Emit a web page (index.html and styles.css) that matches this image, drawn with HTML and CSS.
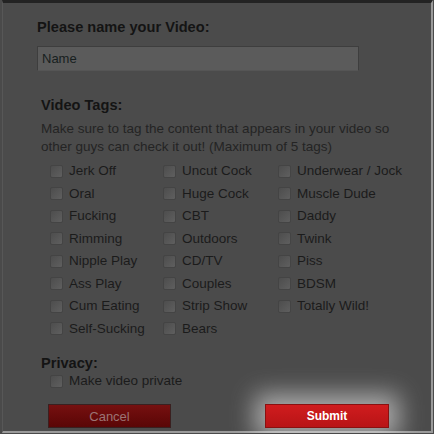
FILE: index.html
```html
<!DOCTYPE html>
<html lang="en">
<head>
    <meta charset="UTF-8">
    <title>Name your Video</title>
    <link rel="stylesheet" href="styles.css">
</head>
<body>
    <div class="dialog">
        <h2 class="title">Please name your Video:</h2>
        <input class="name-field" type="text" value="Name">

        <div class="section">
            <h2>Video Tags:</h2>
            <p class="hint">Make sure to tag the content that appears in your video so other guys can check it out! (Maximum of 5 tags)</p>
            <div class="tag-grid">
                <label class="tag"><input type="checkbox"><span>Jerk Off</span></label>
                <label class="tag"><input type="checkbox"><span>Oral</span></label>
                <label class="tag"><input type="checkbox"><span>Fucking</span></label>
                <label class="tag"><input type="checkbox"><span>Rimming</span></label>
                <label class="tag"><input type="checkbox"><span>Nipple Play</span></label>
                <label class="tag"><input type="checkbox"><span>Ass Play</span></label>
                <label class="tag"><input type="checkbox"><span>Cum Eating</span></label>
                <label class="tag"><input type="checkbox"><span>Self-Sucking</span></label>
                <label class="tag"><input type="checkbox"><span>Uncut Cock</span></label>
                <label class="tag"><input type="checkbox"><span>Huge Cock</span></label>
                <label class="tag"><input type="checkbox"><span>CBT</span></label>
                <label class="tag"><input type="checkbox"><span>Outdoors</span></label>
                <label class="tag"><input type="checkbox"><span>CD/TV</span></label>
                <label class="tag"><input type="checkbox"><span>Couples</span></label>
                <label class="tag"><input type="checkbox"><span>Strip Show</span></label>
                <label class="tag"><input type="checkbox"><span>Bears</span></label>
                <label class="tag"><input type="checkbox"><span>Underwear / Jock</span></label>
                <label class="tag"><input type="checkbox"><span>Muscle Dude</span></label>
                <label class="tag"><input type="checkbox"><span>Daddy</span></label>
                <label class="tag"><input type="checkbox"><span>Twink</span></label>
                <label class="tag"><input type="checkbox"><span>Piss</span></label>
                <label class="tag"><input type="checkbox"><span>BDSM</span></label>
                <label class="tag"><input type="checkbox"><span>Totally Wild!</span></label>
            </div>
        </div>

        <div class="section privacy">
            <h2>Privacy:</h2>
            <label class="tag private"><input type="checkbox"><span>Make video private</span></label>
        </div>

        <div class="actions">
            <button class="btn cancel">Cancel</button>
            <button class="btn submit">Submit</button>
        </div>
    </div>
</body>
</html>
```

FILE: styles.css
```css
body {
    margin: 0;
    background-color: #4a4a4a;
    font-family: "Liberation Sans", Arial, sans-serif;
    color: #202020;
}
.dialog {
    box-sizing: border-box;
    width: 431px;
    height: 433px;
    margin-left: 2px;
    padding: 15px 0 0 34px;
    border-top: 3px solid #232323;
    border-left: 1px solid #575757;
    border-right: 2px solid #9a9a9a;
    border-bottom: 2px solid #9a9a9a;
    background-color: #4b4b4b;
}
h2 {
    margin: 0;
    font-size: 14.6px;
    line-height: 18px;
    font-weight: bold;
    color: #141414;
}
.name-field {
    display: block;
    box-sizing: border-box;
    width: 322px;
    height: 25px;
    margin-top: 10px;
    padding: 0 4px;
    border: 1px solid #3e3e3e;
    border-bottom-color: #555;
    background-color: #5b5b5b;
    font-family: "Liberation Sans", Arial, sans-serif;
    font-size: 13px;
    color: #172020;
}
.section {
    padding-left: 4px;
    width: 372px;
}
.section h2 {
    margin-top: 25px;
}
.hint {
    margin: 5.5px 0 0;
    font-size: 13.5px;
    line-height: 18px;
    color: #242424;
}
.tag-grid {
    display: grid;
    grid-auto-flow: column;
    grid-template-rows: repeat(8, 22.5px);
    grid-template-columns: 113px 115px auto;
    margin-top: 4.5px;
    padding-left: 9px;
}
.tag {
    display: flex;
    align-items: center;
    gap: 6px;
    font-size: 13.5px;
    line-height: 22.5px;
    color: #1b1b1b;
    white-space: nowrap;
}
.tag input {
    appearance: none;
    box-sizing: border-box;
    width: 13px;
    height: 13px;
    margin: 0;
    border: 1px solid #444;
    border-radius: 2px;
    background: linear-gradient(135deg, #4d4d4d, #5f5f5f);
}
.privacy h2 {
    margin-top: 14px;
}
.private {
    padding-left: 9px;
    line-height: 18px;
}
.actions {
    display: flex;
    gap: 94px;
    margin-top: 14px;
    padding-left: 11px;
}
.btn {
    box-sizing: border-box;
    width: 123px;
    height: 24px;
    padding: 0;
    font-family: "Liberation Sans", Arial, sans-serif;
    font-size: 13px;
    cursor: pointer;
}
.cancel {
    border: 1px solid #3a2020;
    background: linear-gradient(#761010, #5a0606);
    color: #9c7474;
}
.submit {
    width: 124px;
    border: 1px solid #8a1010;
    background: linear-gradient(#d01c1e, #b81416);
    color: #fff;
    font-size: 12px;
    font-weight: bold;
    box-shadow: 0 0 24px 10px rgba(235, 235, 235, 0.6);
}
```
